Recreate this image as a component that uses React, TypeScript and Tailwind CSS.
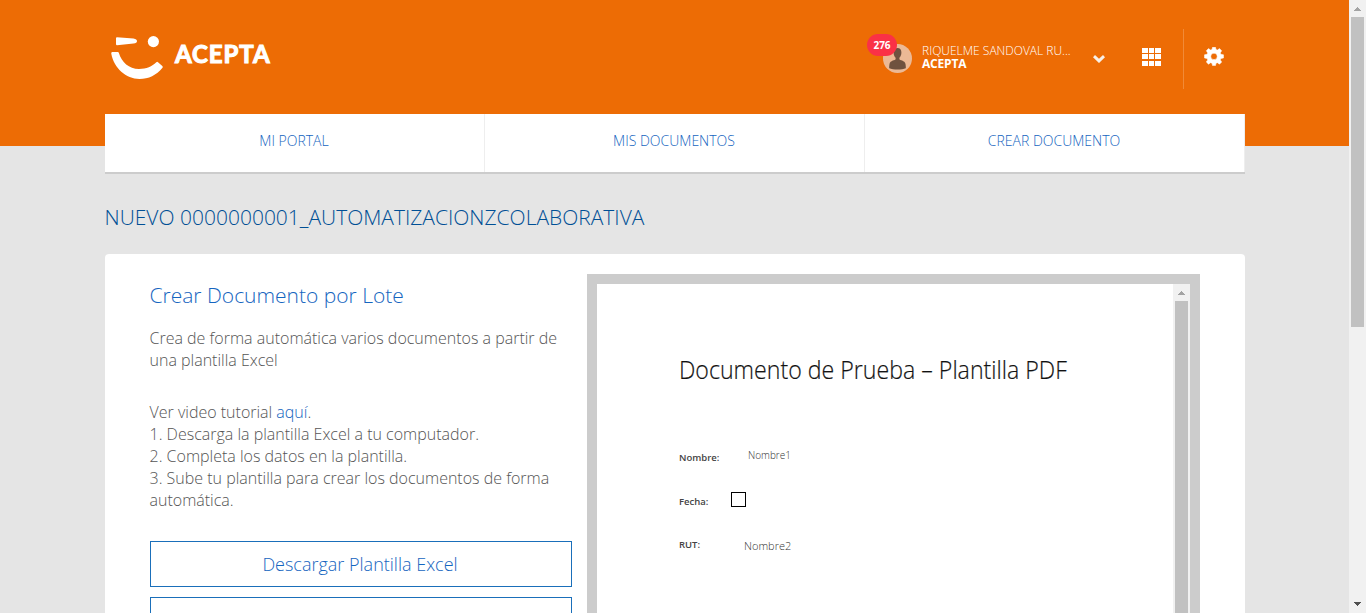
import React from "react";

function ScrollArrow({ down = false, color }: { down?: boolean; color: string }) {
  return (
    <svg width="7" height="4" viewBox="0 0 7 4" shapeRendering="crispEdges" fill={color}>
      {down ? <path d="M0 0h7v1H6v1H5v1H4v1H3V3H2V2H1V1H0z" /> : <path d="M3 0h1v1h1v1h1v1h1v1H0V3h1V2h1V1h1z" />}
    </svg>
  );
}

function Logo() {
  return (
    <svg width="53" height="44" viewBox="110 36 53 44" fill="#fff">
      <path d="M117 37.2 L133.5 38.6 Q137 39.2 137 41.3 Q137 43.2 133.5 43.6 L117 45.2 Q116 45.2 116 44 L116 38.2 Q116 37.2 117 37.2z" />
      <circle cx="153.4" cy="41.6" r="5.6" />
      <path d="M112.5 52 H117.8 Q118.6 52 118.9 53 C121.5 62 129 69 139 69 C146.500 69 152 66.500 156.300 62.300 Q157.200 61.500 158 62.200 L162.300 66 Q163.200 67 162.300 67.900 C156.500 75 148.500 78.900 139.500 78.900 C126 78.900 114 68 111.300 53.700 Q111 52 112.500 52z" />
    </svg>
  );
}

function Header() {
  return (
    <header className="h-[146px] bg-[#ed6c05] pl-[105px]">
      <div className="flex h-[114px] w-[1140px] pt-[29px] text-white">
        <div className="flex pl-[5px] pt-[7px]">
          <Logo />
          <span className="ml-[12px] mt-px h-[34px] font-['Lato',sans-serif] text-[24px] font-bold leading-[34px] tracking-[0.900px] [-webkit-text-stroke:1.1px_white] [stroke-linejoin:round]">
            ACEPTA
          </span>
        </div>
        <div className="ml-auto flex pr-[21.500px]">
          <div className="relative mt-[15px] size-[29px]">
            <svg width="29" height="29" viewBox="0 0 29 29">
              <circle cx="14.500" cy="14.500" r="14.500" fill="#ecb995" />
              <path d="M14.500 4c2.600 0 4 2 3.900 4.700-.1 2.300-1 4.100-2 5v1.500c0 1 5.500 1 6.100 4.800.3 1.800.4 3.500.3 4.200-4 1.700-12.500 1.700-16.600 0-.1-.7 0-2.400.3-4.200.6-3.800 6.100-3.800 6.100-4.800v-1.500c-1-.9-1.900-2.700-2-5C10.500 6 11.900 4 14.500 4z" fill="#6f523f" />
            </svg>
            <span className="absolute -left-4 -top-[10px] flex h-[22px] w-[30px] items-center justify-center rounded-full bg-[#fa3146] text-[10px] font-bold">
              276
            </span>
          </div>
          <div className="ml-[10px] mt-[15px] w-[160px] text-[12px] leading-[13px]">
            <div className="whitespace-nowrap font-light">RIQUELME SANDOVAL RU...</div>
            <div className="font-bold tracking-[-0.2px]">ACEPTA</div>
          </div>
          <svg className="ml-[11px] mt-[26px]" width="12" height="8" viewBox="0 0 12 8" fill="#f8f0e8">
            <path d="M2 0 L6 3.700 L10 0 L12 2.200 L6 8 L0 2.200z" />
          </svg>
          <svg className="ml-[37px] mt-[19px]" width="19" height="18" viewBox="0 0 19 18" fill="#fff" shapeRendering="crispEdges">
            <path d="M0 0h6v5H0zM7 0h5v5H7zM13 0h6v5h-6zM0 6h6v5H0zM7 6h5v5H7zM13 6h6v5h-6zM0 13h6v5H0zM7 13h5v5H7zM13 13h6v5h-6z" />
          </svg>
          <div className="ml-[22px] flex h-[60px] border-l border-[#f18a37]">
            <svg className="ml-[19.500px] mt-[17.500px]" width="20" height="19" viewBox="0 0 20 19" fill="#fff" stroke="#fff" strokeWidth="0.500" strokeLinejoin="round">
              <path fillRule="evenodd" d="M8.500 0.300h3l.5 2.200 1.400.6 2.100-1.500 2.200 2.200-1.400 2.100.6 1.400 2.600.5v3.200l-2.600.5-.6 1.400 1.400 2.100-2.200 2.200-2.100-1.500-1.400.6-.5 2.300h-3L8 16.300l-1.400-.6-2.100 1.500L2.300 15l1.400-2.100-.6-1.400L.500 11V7.800l2.600-.5.6-1.400-1.400-2.100 2.200-2.200 2.100 1.500L8 2.500zM10 6.200a3.200 3.200 0 1 0 0 6.400 3.200 3.200 0 0 0 0-6.400z" />
            </svg>
          </div>
        </div>
      </div>
    </header>
  );
}

function Nav() {
  return (
    <nav className="relative -mt-8 ml-[105px] grid h-[60px] w-[1140px] grid-cols-3 border-b-2 border-[#ccc] bg-white text-center text-[14px] font-light leading-[20px] text-[#1565c0]">
      <a className="border-r border-[#eee] pr-px pt-[17px]">MI PORTAL</a>
      <a className="border-r border-[#eee] pr-px pt-[17px]">MIS DOCUMENTOS</a>
      <a className="border-r border-[#eee] pr-px pt-[17px]">CREAR DOCUMENTO</a>
    </nav>
  );
}

function BatchInstructions() {
  return (
    <section className="w-[422px] text-[16px] font-light leading-[22px] text-[#555]">
      <div className="-ml-[0.500px] h-[247px] whitespace-nowrap">
        <h2 className="pb-px pt-[6px] text-[21px] leading-[30px] text-[#1565c0]">Crear Documento por Lote</h2>
        <p className="mt-4">
          Crea de forma automática varios documentos a partir de
          <br />
          una plantilla Excel
        </p>
        <p className="mt-[30px]">
          Ver video tutorial <a className="text-[#1565c0]">aquí</a>.
        </p>
        <p>1. Descarga la plantilla Excel a tu computador.</p>
        <p>2. Completa los datos en la plantilla.</p>
        <p>
          3. Sube tu plantilla para crear los documentos de forma
          <br />
          automática.
        </p>
      </div>
      <button className="mt-[20px] block h-[46px] w-full border border-[#1a6fba] pr-[2px] text-[18px] text-[#1565c0]">
        Descargar Plantilla Excel
      </button>
      <button className="mt-[10px] block h-[46px] w-full border border-[#1a6fba]" />
    </section>
  );
}

function DocumentPreview() {
  return (
    <section className="ml-[15px] flex h-[600px] w-[613px] border-[10px] border-[#ccc] bg-white">
      <div className="w-[576px] pl-[82px] pt-[65px]">
        <h3 className="h-[40px] w-fit origin-left scale-x-[0.926] whitespace-nowrap text-[25px] font-light leading-[40px] text-[#111] [-webkit-text-stroke:0.2px_#222]">
          Documento de Prueba – Plantilla PDF
        </h3>
        <div className="mt-[56px] flex h-[20px] leading-[20px]">
          <b className="w-[69px] pt-[3px] text-[9.500px] font-semibold text-[#444]">Nombre:</b>
          <span className="text-[10px] font-light text-[#333]">Nombre1</span>
        </div>
        <div className="mt-6 flex h-[20px] leading-[20px]">
          <b className="w-[52px] pt-[3px] text-[9.500px] font-semibold text-[#444]">Fecha:</b>
          <span className="mt-[3px] size-[15px] border border-black bg-white" />
        </div>
        <div className="mt-6 flex h-[20px] leading-[20px]">
          <b className="w-[65px] pt-[2px] text-[9.500px] font-semibold text-[#444]">RUT:</b>
          <span className="pt-[3px] text-[11px] font-light text-[#333]">Nombre2</span>
        </div>
      </div>
      <div className="flex w-[17px] flex-col items-center bg-[#f1f1f1]">
        <div className="flex h-[17px] pt-[7px]">
          <ScrollArrow color="#a3a3a3" />
        </div>
        <div className="w-[13px] flex-1 bg-[#c1c1c1]" />
      </div>
    </section>
  );
}

export default function App() {
  return (
    <div className="flex h-[613px] w-[1366px] overflow-hidden bg-[#e5e5e5] font-['Open_Sans',sans-serif]">
      <div className="w-[1349px]">
        <Header />
        <Nav />
        <h1 className="ml-[104.500px] mt-[28px] h-[30px] text-[21px] font-light leading-[30px] text-[#004f95]">
          NUEVO 0000000001_AUTOMATIZACIONZCOLABORATIVA
        </h1>
        <main className="ml-[105px] mt-[22px] flex h-[700px] w-[1140px] rounded-t bg-white pl-[45px] pt-[20px]">
          <BatchInstructions />
          <DocumentPreview />
        </main>
      </div>
      <div className="flex w-[17px] flex-col items-center bg-[#f1f1f1]">
        <div className="flex h-[17px] pt-[7px]">
          <ScrollArrow color="#a3a3a3" />
        </div>
        <div className="h-[310px] w-[13px] bg-[#c1c1c1]" />
        <div className="mt-auto h-[11px]">
          <ScrollArrow down color="#505050" />
        </div>
      </div>
    </div>
  );
}
